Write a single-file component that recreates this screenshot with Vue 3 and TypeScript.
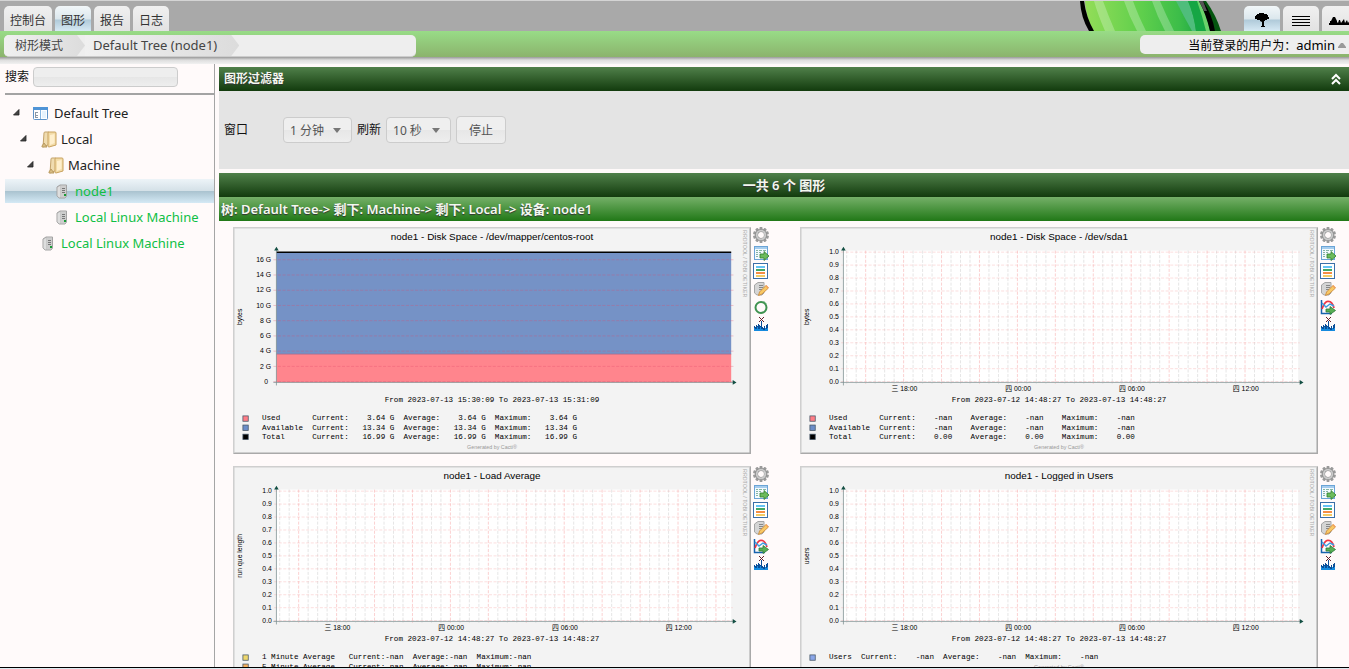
<script setup lang="ts">
import { ref } from 'vue'

interface LegendRow { color: string; text: string }
interface Graph {
  title: string
  axis: string
  filled: boolean
  period: string
  legend: LegendRow[]
}
interface TreeNode {
  label: string
  level: number
  icon: 'tree' | 'folder' | 'host'
  open?: boolean
  selected?: boolean
}

const tabs = ['控制台', '图形', '报告', '日志']
const windowSize = ref('1 分钟')
const refresh = ref('10 秒')
const search = ref('')

const nodes: TreeNode[] = [
  { label: 'Default Tree', level: 0, icon: 'tree', open: true },
  { label: 'Local', level: 1, icon: 'folder', open: true },
  { label: 'Machine', level: 2, icon: 'folder', open: true },
  { label: 'node1', level: 3, icon: 'host', selected: true },
  { label: 'Local Linux Machine', level: 3, icon: 'host' },
  { label: 'Local Linux Machine', level: 1, icon: 'host' },
]

const day = 'From 2023-07-12 14:48:27 To 2023-07-13 14:48:27'
const graphs: Graph[] = [
  {
    title: 'node1 - Disk Space - /dev/mapper/centos-root', axis: 'bytes', filled: true,
    period: 'From 2023-07-13 15:30:09 To 2023-07-13 15:31:09',
    legend: [
      { color: '#ff7d86', text: 'Used       Current:    3.64 G  Average:    3.64 G  Maximum:    3.64 G' },
      { color: '#6b8dc8', text: 'Available  Current:   13.34 G  Average:   13.34 G  Maximum:   13.34 G' },
      { color: '#000000', text: 'Total      Current:   16.99 G  Average:   16.99 G  Maximum:   16.99 G' },
    ],
  },
  {
    title: 'node1 - Disk Space - /dev/sda1', axis: 'bytes', filled: false, period: day,
    legend: [
      { color: '#ff7d86', text: 'Used       Current:    -nan    Average:    -nan    Maximum:    -nan' },
      { color: '#6b8dc8', text: 'Available  Current:    -nan    Average:    -nan    Maximum:    -nan' },
      { color: '#000000', text: 'Total      Current:    0.00    Average:    0.00    Maximum:    0.00' },
    ],
  },
  {
    title: 'node1 - Load Average', axis: 'run que length', filled: false, period: day,
    legend: [
      { color: '#eed76c', text: '1 Minute Average   Current:-nan  Average:-nan  Maximum:-nan' },
      { color: '#f5b05c', text: '5 Minute Average   Current:-nan  Average:-nan  Maximum:-nan' },
    ],
  },
  {
    title: 'node1 - Logged in Users', axis: 'users', filled: false, period: day,
    legend: [
      { color: '#8aa6e8', text: 'Users  Current:    -nan  Average:    -nan  Maximum:    -nan' },
    ],
  },
]

const unitTicks = Array.from({ length: 11 }, (_, i) => ({ y: 203 - i * 17, label: (i / 10).toFixed(1) }))
const gigTicks = Array.from({ length: 9 }, (_, i) => ({ y: 203 - i * 20, label: i === 0 ? '0' : `${i * 2} G` }))
const hours = Array.from({ length: 48 }, (_, i) => i - 6).map((i) => ({ x: 136 + i * 12.45, major: i % 4 === 0 }))
const dates = ['三 18:00', '四 00:00', '四 06:00', '四 12:00'].map((label, i) => ({ label, x: 136 + i * 149.4 }))
const gearTeeth = [0, 36, 72, 108, 144, 180, 216, 252, 288, 324]
</script>

<template>
  <div class="page">
    <header class="top">
      <nav class="tabs">
        <a v-for="(t, i) in tabs" :key="t" href="#" class="tab" :class="{ active: i === 1 }">{{ t }}</a>
      </nav>
      <div class="top-right">
        <svg class="cactus" width="144" height="30" viewBox="0 0 144 30">
          <defs>
            <linearGradient id="cactus-body" x1="0" x2="1" y1="0" y2="0">
              <stop offset="0" stop-color="#93dd58" /><stop offset=".45" stop-color="#5fcf4c" />
              <stop offset=".75" stop-color="#3cbd49" /><stop offset="1" stop-color="#0d9c3f" />
            </linearGradient>
          </defs>
          <path d="M123 0H126Q136 14 141 30H133Z" fill="#04550f" />
          <path d="M5 0H120Q128 13 131 30H13Q6 16 5 0Z" fill="url(#cactus-body)" />
          <path d="M14 0H23Q28 14 35 30H25Q18 14 14 0ZM44 0H53Q58 14 66 30H57Q49 15 44 0ZM72 0H80Q86 14 94 30H85Q77 15 72 0Z" fill="#fff" opacity=".25" />
          <path d="M96 0H108Q114 14 116 30H112Q103 14 96 0Z" fill="#4fbd7c" />
          <path d="M108 0H119Q126 14 128 30H116Q114 14 108 0Z" fill="#16a644" />
          <path d="M117 0H120Q127 14 130 30H126Q122 14 117 0Z" fill="#6bd36b" />
          <path d="M0 0H4Q6 16 14 30H9Q1 17 0 0Z" fill="#000" />
          <path d="M119 0H123Q132 13 135 30H130Q126 13 119 0Z" fill="#000" />
          <path d="M119 0H123L127 10H124Z" fill="#555" />
        </svg>
        <a href="#" class="tab icon-tab active" aria-label="树形视图">
          <svg width="18" height="16" viewBox="0 0 18 16"><path d="M6 1H11V2H14V3H15V5H16V7H14V8H12V9H11V14H12V15H8V14H9V10L7 9V8H4V7H2V4H3V3H4V2H6Z" /></svg>
        </a>
        <a href="#" class="tab icon-tab" aria-label="列表视图">
          <svg width="18" height="16" viewBox="0 0 18 16"><path d="M0 4H18V5H0ZM0 7H18V8H0ZM0 10H18V11H0ZM0 13H18V14H0Z" /></svg>
        </a>
        <a href="#" class="tab icon-tab" aria-label="预览视图">
          <svg width="22" height="16" viewBox="0 0 22 16"><path d="M0 13V11H1V9H2L4 5H6L8 9V10L9 11L10 8H11L12 11L15 7L16 11L18 8L19 11L21 8L22 10V13Z" /></svg>
        </a>
      </div>
    </header>

    <div class="crumb-bar">
      <nav class="crumbs">
        <a href="#" class="crumb">树形模式</a>
        <a href="#" class="crumb wide">Default Tree (node1)</a>
      </nav>
      <button class="user" type="button">
        <span>当前登录的用户为：<span class="name">admin</span></span>
        <svg width="8" height="6" viewBox="0 0 8 6"><path d="M3 0H5L8 4V5H0V4Z" fill="#999" /></svg>
      </button>
    </div>
    <div class="shade"></div>

    <div class="body">
      <aside class="side">
        <div class="search">
          <label for="tree-search">搜索</label>
          <input id="tree-search" v-model="search" type="text" />
        </div>
        <ul class="tree">
          <li v-for="(n, i) in nodes" :key="i" class="node" :class="[`level-${n.level}`, { selected: n.selected }]">
            <span class="twist"><svg v-if="n.open" width="7" height="7" viewBox="0 0 7 7"><path d="M6 0.500V6H0.500Z" fill="#444" stroke="#222" stroke-width=".8" /></svg></span>
            <svg v-if="n.icon === 'tree'" class="node-icon" width="18" height="16" viewBox="0 0 18 16">
              <rect x=".5" y="2.500" width="14" height="12" rx="1" fill="#fff" stroke="#5e93c8" />
              <path d="M0 2H15V5H0Z" fill="#4f94d6" />
              <path d="M7 5H8V14H7Z" fill="#86b6e2" />
              <path d="M2 7H5V8H3V10H5V11H3V12H5V13H2Z" fill="#8b98a5" />
              <path d="M9 6H13V13H9Z" fill="#e7f3fd" />
            </svg>
            <svg v-else-if="n.icon === 'folder'" class="node-icon" width="18" height="20" viewBox="0 0 18 20">
              <path d="M4 4Q4 3 5 3H9L10 15L3 18Z" fill="#f0dcb0" stroke="#c3a36a" />
              <path d="M8 4Q8 3 9 3H15Q16 3 16 4V16L9 18Q8 18 8 17Z" fill="#f3dca8" stroke="#c9a25e" />
              <path d="M2 17L4 14L7 18H2Z" fill="#d9bd84" stroke="#b99a60" />
              <path d="M10 6L14.500 5V14L10 16Z" fill="#ffefcd" />
            </svg>
            <svg v-else class="node-icon" width="18" height="16" viewBox="0 0 18 16">
              <path d="M3 4L6 2H12.500V13L11 15H5L3 13Z" fill="#b5b5b5" stroke="#a3a3a3" />
              <path d="M3.500 4.500L6.500 2.500V14.500H5L3.500 13Z" fill="#dedede" />
              <path d="M7 2.500H12V13L11 14.500H7Z" fill="#cdcdcd" />
              <path d="M8 5H11V6H8ZM8 7H11V8H8ZM8 9H11V10H8Z" fill="#777" />
              <path d="M10 11H12V13H10Z" fill="#169b35" />
            </svg>
            <a href="#" :class="{ host: n.icon === 'host' }">{{ n.label }}</a>
          </li>
        </ul>
      </aside>

      <main class="main">
        <div class="bar filter-head">
          <span>图形过滤器</span>
          <button type="button" class="fold" aria-label="收起">
            <svg width="12" height="14" viewBox="0 0 12 14" fill="none" stroke="#fff" stroke-width="2"><path d="M2 7L6 3L10 7M2 12L6 8L10 12" /></svg>
          </button>
        </div>
        <form class="filter" @submit.prevent>
          <label for="win" class="win-label">窗口</label>
          <span class="pick pick-window"><select id="win" v-model="windowSize"><option>1 分钟</option><option>5 分钟</option></select></span>
          <label for="refresh">刷新</label>
          <span class="pick pick-refresh"><select id="refresh" v-model="refresh"><option>10 秒</option><option>30 秒</option></select></span>
          <button type="button" class="stop">停止</button>
        </form>
        <div class="bar total">一共 6 个 图形</div>
        <div class="bar path">树: Default Tree-&gt; 剩下: Machine-&gt; 剩下: Local -&gt; 设备: node1</div>

        <section class="graphs">
          <article v-for="(g, gi) in graphs" :key="g.title" class="graph">
            <svg class="chart" viewBox="0 0 680 298" role="img" :aria-label="g.title">
              <rect width="680" height="298" fill="#f3f3f3" />
              <path d="M0 298V0H680L678 2H2V296Z" fill="#cfcfcf" />
              <path d="M680 0V298H0L2 296H678V2Z" fill="#a9a9a9" />
              <text x="340" y="17" class="title mid">{{ g.title }}</text>
              <text x="0" y="0" class="axis mid" transform="translate(12 118) rotate(-90)">{{ g.axis }}</text>
              <text x="0" y="0" class="mark" transform="translate(669 4) rotate(90)">RRDTOOL / TOBI OETIKER</text>

              <template v-if="g.filled">
                <rect x="57" y="33" width="597" height="134" fill="#7592c6" />
                <rect x="57" y="167" width="597" height="37" fill="#ff858d" />
                <path d="M57 167H654" stroke="#b8607f" />
                <path d="M57 33H654" stroke="#000" stroke-width="2" />
                <g v-for="t in gigTicks" :key="t.y">
                  <path :d="`M53 ${t.y}H658`" class="grid-major strong" />
                  <text :x="t.label === '0' ? 46 : 50" :y="t.y + 3" class="axis end">{{ t.label }}</text>
                </g>
              </template>
              <template v-else>
                <rect x="57" y="31" width="597" height="173" fill="#fff" />
                <path v-for="h in hours" :key="h.x" :d="`M${h.x} 31V206`" :class="h.major ? 'grid-major' : 'grid-minor'" />
                <g v-for="t in unitTicks" :key="t.y">
                  <path :d="`M54 ${t.y}H656`" class="grid-major level" />
                  <text x="51" :y="t.y + 3" class="axis end">{{ t.label }}</text>
                </g>
                <text v-for="d in dates" :key="d.label" :x="d.x + 1" y="215" class="axis mid">{{ d.label }}</text>
              </template>
              <path d="M57 30V208M53 204H657" stroke="#7d8f91" fill="none" />
              <path d="M57 26L60 31H54ZM661 204L656 201V207Z" fill="#134f43" />

              <text x="340" y="230" class="mono mid">{{ g.period }}</text>
              <g v-for="(row, ri) in g.legend" :key="ri">
                <rect x="13" :y="248 + ri * 12" width="7" height="7" :fill="row.color" stroke="#456" />
                <text x="38" :y="254 + ri * 12" class="mono">{{ row.text }}</text>
              </g>
              <text x="340" :y="g.legend.length === 1 ? 267 : 291" class="mark mid credit">Generated by Cacti®</text>
            </svg>

            <div class="tools">
              <a href="#" aria-label="图形设置">
                <svg width="16" height="16" viewBox="0 0 16 16">
                  <rect v-for="a in gearTeeth" :key="a" x="6.500" y="0" width="3" height="4" rx=".7" fill="#9a9a9a" :transform="`rotate(${a} 8 8)`" />
                  <circle cx="8" cy="8" r="4.500" fill="none" stroke="#929292" stroke-width="3" />
                  <circle cx="8" cy="8" r="4.300" fill="none" stroke="#cbcbcb" stroke-width="1.800" />
                </svg>
              </a>
              <a href="#" aria-label="导出数据">
                <svg width="16" height="16" viewBox="0 0 16 16">
                  <rect x="1.500" y="1.500" width="13" height="13" fill="#f4fafe" stroke="#6ba4d6" />
                  <path d="M2 2H14V4H2Z" fill="#a6cdee" />
                  <path d="M3 5H5V6H3ZM6 5H9V6H6ZM10 5H13V6H10ZM3 7H5V8H3ZM6 7H8V8H6ZM3 9H5V10H3ZM3 11H5V12H3Z" fill="#85b5a4" />
                  <path d="M7 9H11V6.500L16 11L11 15.500V13H7Z" fill="#6cbb5c" stroke="#2f7f2b" stroke-width=".8" />
                </svg>
              </a>
              <a href="#" aria-label="图形列表">
                <svg width="16" height="16" viewBox="0 0 16 16">
                  <rect x=".5" y=".5" width="14" height="15" fill="#fff" stroke="#3b6fa8" />
                  <path d="M3 3H12V5H3Z" fill="#64c2f4" /><path d="M3 6H12V8H3Z" fill="#44a765" />
                  <path d="M3 9H12V11H3Z" fill="#f58d45" /><path d="M3 12H12V14H3Z" fill="#f4cb64" />
                </svg>
              </a>
              <a href="#" aria-label="编辑设备">
                <svg width="16" height="16" viewBox="0 0 16 16">
                  <path d="M1.500 4L5 1.500H11V12L9 14H4L1.500 12Z" fill="#d5d5d5" stroke="#a5a5a5" />
                  <path d="M6 4H10V5H6ZM6 6H10V7H6ZM6 8H9V9H6Z" fill="#888" />
                  <path d="M6.500 11L13 4.500L15.500 7L9 13L5.500 14.500Z" fill="#f8c865" stroke="#c98432" stroke-width=".8" />
                  <path d="M12.500 5L13.500 4L15.500 6.500L14.500 7.500Z" fill="#f5a05c" />
                </svg>
              </a>
              <a href="#" :aria-label="gi === 0 ? '实时' : '图形缩放'">
                <svg v-if="gi === 0" width="16" height="16" viewBox="0 0 16 16"><circle cx="8" cy="8.500" r="5.500" fill="none" stroke="#3f9350" stroke-width="2" /><path d="M11 2L14 5" stroke="#b5dcbb" stroke-width="1" /></svg>
                <svg v-else width="16" height="16" viewBox="0 0 16 16">
                  <path d="M1.500 1V14.500H12" fill="none" stroke="#1763ae" stroke-width="1.500" />
                  <path d="M2 10Q5 2 8 2.500Q12 2 14 9" fill="none" stroke="#ee3544" stroke-width="1.700" />
                  <path d="M2 4L6 8L10 5L14 7" fill="none" stroke="#3b9de3" stroke-width="1.400" />
                  <path d="M6 10H10V7.500L15.500 11.500L10 15.500V13H6Z" fill="#58af54" stroke="#2d7837" stroke-width=".8" />
                </svg>
              </a>
              <a href="#" aria-label="剔除尖峰">
                <svg width="16" height="16" viewBox="0 0 16 16">
                  <path d="M1 14V9H2V10H3V8H4V9H5V7H6V8H7V9H8V4H9V10H10V11H11V9H12V11H13V8H14V7H15V14Z" fill="#0b4e98" />
                  <path d="M1 14V11H2V12H4V10H5V12H7V10H8V12H10V13H12V11H13V12H14V11H15V14Z" fill="#168ade" />
                  <path d="M6 0H7V1H6ZM10 0H11V1H10ZM7 1H8V2H7ZM9 1H10V2H9ZM8 2H9V3H8ZM7 3H8V4H7ZM9 3H10V4H9ZM6 4H7V5H6ZM10 4H11V5H10Z" fill="#63202a" />
                </svg>
              </a>
            </div>
          </article>
        </section>
      </main>
    </div>
    <footer class="edge"></footer>
  </div>
</template>

<style>
body { background: #fffafa; }
</style>

<style scoped>
* { box-sizing: border-box; }
.page {
  height: 100vh; display: flex; flex-direction: column; overflow: hidden;
  font: 12px/16px "Noto Sans", "Noto Sans CJK SC", sans-serif; color: #111;
}
a { color: inherit; text-decoration: none; }
button, input, select { font: inherit; color: inherit; }
.top {
  flex: none; height: 31px; display: flex; justify-content: space-between; align-items: flex-end;
  background: #a9a9a9; border-top: 1px solid #d4d4d4; overflow: hidden;
}
.tabs { display: flex; gap: 3px; padding-left: 4px; }
.tab {
  height: 25px; padding: 6px 6px 0; border-radius: 5px 5px 0 0; color: #333;
  background: linear-gradient(#f0f0f0, #e2e2e2); line-height: 18px;
}
.tab.active { background: linear-gradient(#f2f7f9 0, #dbe7ed 52%, #b0cad9 56%, #d6e9f4 100%); }
.top-right { display: flex; align-items: flex-end; gap: 3px; margin-right: -9px; }
.cactus { margin-right: 17px; display: block; }
.icon-tab { width: 36px; padding: 6px 0 0; display: flex; justify-content: center; }
.crumb-bar {
  flex: none; height: 26px; display: flex; justify-content: space-between; align-items: flex-start;
  padding: 4px 0 0 4px; background: linear-gradient(#98dc87, #8bb36c);
}
.crumbs {
  width: 412px; height: 22px; display: flex; overflow: hidden; border-radius: 5px;
  background: #eee; border-bottom: 1px solid #ccc; line-height: 22px; color: #444;
}
.crumb { padding: 0 22px 0 11px; background: linear-gradient(90deg, #f0f0f0, #dcdcdc); clip-path: polygon(0 0, calc(100% - 8px) 0, 100% 50%, calc(100% - 8px) 100%, 0 100%); }
.crumb.wide { padding: 0 22px 0 8px; font-size: 13px; line-height: 20px; }
.user {
  width: 216px; height: 19px; margin-right: -7px; border: 0; border-radius: 5px; background: #eee;
  display: flex; justify-content: flex-end; align-items: center; gap: 3px; padding: 2px 10px 0 0;
  color: #000; white-space: nowrap;
}
.name { font-size: 13px; }
.shade { flex: none; height: 7px; background: linear-gradient(#999, #dedede 45%, #f1f1f1); }
.body { flex: 1; min-height: 0; display: flex; gap: 4px; overflow: hidden; }
.side { flex: none; width: 215px; border-right: 1px solid #a5a5a5; padding-left: 5px; }
.search { display: flex; align-items: center; gap: 4px; height: 31px; padding-bottom: 3px; border-bottom: 2px solid #a3a3a3; }
.search input { width: 145px; height: 20px; border: 1px solid #ccc; border-radius: 4px; background: linear-gradient(#eee 50%, #e6e6e6 51%, #eee); }
.tree { list-style: none; margin: 6px 0 0; padding: 0; }
.node { display: flex; align-items: center; height: 24px; margin-bottom: 2px; font-size: 13px; color: #222; padding-left: 8px; }
.level-1 { padding-left: 15px; }
.level-2 { padding-left: 22px; }
.level-3 { padding-left: 29px; }
.twist { width: 20px; line-height: 0; padding-bottom: 2px; }
.node-icon { margin-right: 3px; flex: none; }
.host { color: #0fbf45; }
.selected { background: linear-gradient(#edf4f8 0, #d5e1e8 48%, #a9c2cf 50%, #d4e9f5 100%); }
.main { flex: 1; min-width: 0; padding-top: 3px; }
.bar { height: 24px; line-height: 24px; color: #f4f8f0; font-weight: 600; text-shadow: 0 1px 1px #333; background: linear-gradient(#50804a, #123b0d); }
.filter-head { display: flex; justify-content: space-between; padding: 0 7px 0 5px; }
.fold { border: 0; padding: 0; background: none; line-height: 0; }
.filter { height: 78px; margin-bottom: 4px; padding: 0 5px; background: #e4e4e4; display: flex; align-items: center; gap: 5px; }
.win-label { width: 54px; }
.pick { position: relative; }
.pick-window { width: 69px; }
.pick-refresh { width: 65px; }
.pick::after { content: ""; position: absolute; right: 11px; top: 11px; border: 4px solid transparent; border-top: 5px solid #777; border-bottom: 0; pointer-events: none; }
.pick select, .stop { border: 1px solid #ccc; border-radius: 4px; background: linear-gradient(#efefef 50%, #e7e7e7 52%, #eee); color: #555; }
.pick select { display: block; appearance: none; width: 100%; height: 26px; padding: 1px 20px 0 6px; font-size: 12px; }
.stop { width: 50px; height: 28px; padding: 2px 0 0; }
.total { text-align: center; font-size: 13px; }
.path { background: linear-gradient(#75b068, #217817); padding-left: 2px; white-space: nowrap; font-size: 13px; }
.graphs { display: grid; grid-template-columns: 1fr 1fr; gap: 12px 4px; padding: 6px 0 0 14px; margin-right: -14px; }
.graph { display: flex; align-items: flex-start; gap: 2px; min-width: 0; }
.chart { flex: 0 1 518px; min-width: 0; display: block; }
.tools { display: flex; flex-direction: column; gap: 2px; line-height: 0; }
.chart text { font-family: "Liberation Sans", "Noto Sans CJK SC", sans-serif; font-size: 9px; fill: #000; white-space: pre; }
.chart .title { font-size: 13px; }
.chart .mono { font-family: "Liberation Mono", monospace; font-size: 10px; }
.chart .mark { font-size: 7px; fill: #aaa; }
.chart .credit { fill: #999; }
.mid { text-anchor: middle; }
.end { text-anchor: end; }
.grid-major { stroke: #f7a8a8; stroke-width: 1; stroke-dasharray: 4 2; opacity: .7; fill: none; }
.grid-major.level { opacity: .5; }
.grid-major.strong { stroke: #e04a6a; opacity: .4; }
.grid-minor { stroke: #c9c9c9; stroke-width: 1; stroke-dasharray: 4 2; opacity: .6; }
.edge { flex: none; height: 2px; background: #dceaf0; border-top: 1px solid #000; }
</style>
